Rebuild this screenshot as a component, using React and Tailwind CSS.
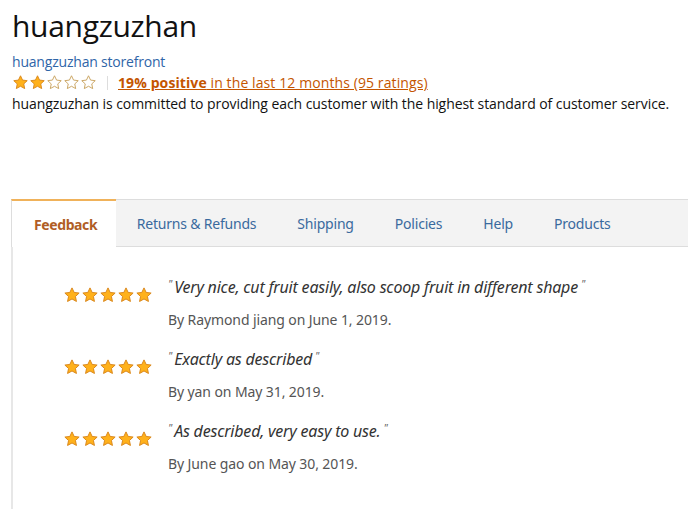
import React from "react";

const STAR = "M12 2.5l2.9 6.1 6.6.8-4.9 4.6 1.3 6.6L12 17.3 6.1 20.6l1.3-6.6L2.5 9.4l6.6-.8z";

function Star({ filled, size = 17 }) {
  return (
    <svg width={size} height={size} viewBox="0 0 24 24" className="block">
      <path
        d={STAR}
        fill={filled ? "#ffb11b" : "#ffffff"}
        stroke={filled ? "#d9861a" : "#c7a05a"}
        strokeWidth="1.3"
        strokeLinejoin="round"
      />
    </svg>
  );
}

function Stars({ n, size }) {
  return (
    <div className="flex">
      {[0, 1, 2, 3, 4].map((i) => (
        <Star key={i} filled={i < n} size={size} />
      ))}
    </div>
  );
}

const reviews = [
  { text: "Very nice, cut fruit easily, also scoop fruit in different shape", by: "By Raymond jiang on June 1, 2019." },
  { text: "Exactly as described", by: "By yan on May 31, 2019." },
  { text: "As described, very easy to use.", by: "By June gao on May 30, 2019." },
];

const tabs = ["Returns & Refunds", "Shipping", "Policies", "Help", "Products"];

export default function App() {
  return (
    <div className="w-[688px] h-[509px] overflow-hidden bg-white font-['Open_Sans',sans-serif] text-[#111]">
      <div className="pl-[12px] pt-[6px]">
        <h1 className="text-[30px] leading-[40px] text-[#111] tracking-[-0.3px]">huangzuzhan</h1>
        <div className="mt-[6px] text-[14px] leading-[19px] text-[#2f65a8] tracking-[-0.2px]">huangzuzhan storefront</div>
        <div className="flex items-center mt-[2px] h-[19px]">
          <Stars n={2} size={17} />
          <div className="ml-[10px] h-[14px] w-px bg-[#ddd]" />
          <div className="ml-[10px] text-[14px] leading-[19px] text-[#c45500] underline tracking-[0.1px]">
            <span className="font-bold">19% positive</span> in the last 12 months (95 ratings)
          </div>
        </div>
        <p className="text-[14px] leading-[19px] mt-[2px] tracking-[-0.07px]">
          huangzuzhan is committed to providing each customer with the highest standard of customer service.
        </p>
      </div>

      <div className="ml-[11px] mt-[86px]">
        <div className="flex h-[48px]">
          <div className="flex items-center pl-[22px] pr-[19px] bg-white border-t-2 border-t-[#f0b25a] border-l border-l-[#ddd] text-[14px] font-bold text-[#b05d25] font-['Noto_Sans',sans-serif] tracking-[-0.4px]">
            Feedback
          </div>
          <div className="flex flex-1 items-center bg-[#f3f3f3] border-y border-[#ddd] text-[14px] text-[#3a6a9e] font-['Noto_Sans',sans-serif]">
            {tabs.map((t) => (
              <div key={t} className="px-[20.5px] tracking-[-0.2px]">{t}</div>
            ))}
          </div>
        </div>
        <div className="border-l-2 border-[#e7e7e7] h-[300px] pt-[27px]">
          {reviews.map((r) => (
            <div key={r.by} className="flex mb-[15px]">
              <div className="w-[155px] pl-[50px] pt-[12px]">
                <Stars n={5} size={18} />
              </div>
              <div>
                <div className="text-[16px] leading-[26px] italic text-[#333] font-['Noto_Sans',sans-serif] tracking-[-0.2px]">
                  <sup className="text-[#666] text-[11px] mr-[2px]">"</sup>
                  {r.text}
                  <sup className="text-[#666] text-[11px] ml-[3px]">"</sup>
                </div>
                <div className="mt-[9px] text-[14px] leading-[22px] text-[#555] font-['Noto_Sans',sans-serif] tracking-[-0.1px]">
                  {r.by}
                </div>
              </div>
            </div>
          ))}
        </div>
      </div>
    </div>
  );
}
